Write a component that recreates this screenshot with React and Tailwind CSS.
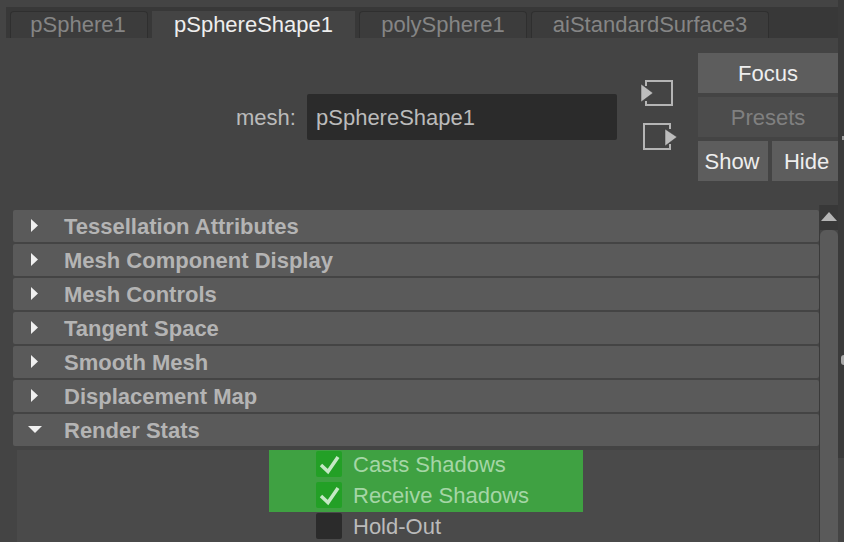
import React from 'react';

const tabs = [
  { label: 'pSphere1', width: 'w-[138px] pr-[2px]' },
  { label: 'pSphereShape1', width: 'w-[203px]', active: true },
  { label: 'polySphere1', width: 'w-[168px]' },
  { label: 'aiStandardSurface3', width: 'w-[238px]' },
];

const sections = [
  'Tessellation Attributes',
  'Mesh Component Display',
  'Mesh Controls',
  'Tangent Space',
  'Smooth Mesh',
  'Displacement Map',
];

const Tab = ({ label, width, active }) => (
  <div
    className={`${width} h-[27px] flex items-center justify-center text-[22px] leading-none ${
      active
        ? 'bg-[#444444] text-[#eeeeee]'
        : 'bg-[#3c3c3c] text-[#858585] border-x border-t border-[#2f2f2f] rounded-t-sm'
    }`}
  >
    {label}
  </div>
);

const PrevIcon = () => (
  <svg width="38" height="28" viewBox="0 0 38 28">
    <path d="M6 7V2H32V26H6V22" fill="none" stroke="#b5b5b5" strokeWidth="2" />
    <path d="M1 5L13 14L1 23Z" fill="#bdbdbd" stroke="#383838" strokeWidth="0.5" />
  </svg>
);

const NextIcon = () => (
  <svg width="38" height="29" viewBox="0 0 38 29">
    <path d="M30 7V2H4V27H30V22" fill="none" stroke="#b5b5b5" strokeWidth="2" />
    <path d="M25 7L37 15L25 24Z" fill="#bdbdbd" stroke="#383838" strokeWidth="0.5" />
  </svg>
);

const Caret = ({ open }) => (
  <svg width="14" height="16" viewBox="0 0 14 16" className="shrink-0 -mt-[1px]">
    {open ? <path d="M0 4H14L7 11Z" fill="#f0f0f0" /> : <path d="M3 1L10 7.5L3 14Z" fill="#f0f0f0" />}
  </svg>
);

const SectionRow = ({ label, open }) => (
  <div className="h-8 mb-0.5 pl-[15px] flex items-center gap-[22px] bg-[#5a5a5a] rounded-[2px]">
    <Caret open={open} />
    <span className="font-bold text-[22px] leading-none pt-[1px] text-[#b4b4b4]">{label}</span>
  </div>
);

const Check = ({ label, checked }) => (
  <div className={`h-[31px] w-[314px] pl-[47px] pt-[1px] flex items-start gap-[11px] ${checked ? 'bg-[#3fa142]' : ''}`}>
    <div className={`w-[26px] h-[26px] rounded-[2px] ${checked ? 'bg-[#23a026]' : 'bg-[#2b2b2b]'}`}>
      {checked && (
        <svg width="26" height="26" viewBox="0 0 26 26">
          <path d="M5 14L12 20.5L22 6" fill="none" stroke="#c5e8c5" strokeWidth="3.5" />
        </svg>
      )}
    </div>
    <span className={`text-[22px] leading-[28px] ${checked ? 'text-[#a5d6a6]' : 'text-[#bbbbbb]'}`}>{label}</span>
  </div>
);

export default function App() {
  return (
    <div className="w-[844px] h-[542px] flex overflow-hidden bg-[#444444] font-['Liberation_Sans',Arial,sans-serif]">
      <div className="w-[838px] shrink-0 flex flex-col">
        {/* tab strip */}
        <div className="mt-[7px] ml-[6px] h-[31px] pl-1 flex gap-1 items-end bg-[#383838]">
          {tabs.map((t) => (
            <Tab key={t.label} {...t} />
          ))}
        </div>

        {/* mesh field and buttons */}
        <div className="h-[167px] flex">
          <div className="ml-[236px] mt-14 h-[46px] flex items-center">
            <span className="w-[71px] pt-[2px] text-[22px] leading-none text-[#bbbbbb]">mesh:</span>
            <div className="w-[310px] h-[46px] pl-[9px] pt-[1px] flex items-center bg-[#2b2b2b] rounded-[2px] text-[22px] text-[#bbbbbb]">
              pSphereShape1
            </div>
          </div>
          <div className="ml-[23px] w-[38px] pt-[41px] flex flex-col gap-[15px]">
            <PrevIcon />
            <NextIcon />
          </div>
          <div className="ml-5 w-[140px] pt-[15px] flex flex-col gap-1">
            <div className="h-10 flex items-center justify-center bg-[#5d5d5d] text-[22px] text-[#eeeeee]">Focus</div>
            <div className="h-10 flex items-center justify-center bg-[#4c4c4c] text-[22px] text-[#808080]">Presets</div>
            <div className="flex gap-1">
              <div className="w-[70px] h-10 pr-[2px] flex items-center justify-center bg-[#5d5d5d] text-[22px] text-[#eeeeee]">Show</div>
              <div className="w-[66px] h-10 pl-[3px] flex items-center justify-center bg-[#5d5d5d] text-[22px] text-[#eeeeee]">Hide</div>
            </div>
          </div>
        </div>

        {/* attribute sections */}
        <div className="ml-[13px] flex flex-1 min-h-0">
          <div className="w-[806px] pt-[5px]">
            {sections.map((s) => (
              <SectionRow key={s} label={s} />
            ))}
            <SectionRow label="Render Stats" open />
            <div className="ml-1 mt-1 h-[94px] pl-[252px] bg-[#4a4a4a]">
              <Check label="Casts Shadows" checked />
              <Check label="Receive Shadows" checked />
              <Check label="Hold-Out" />
            </div>
          </div>
          <div className="w-[19px] border-l border-[#3a3a3a] flex flex-col">
            <div className="h-[25px] pt-[7px] bg-[#383838] flex justify-center">
              <svg width="16" height="9" viewBox="0 0 16 9"><path d="M8 0L16 9H0Z" fill="#b5b5b5" /></svg>
            </div>
            <div className="flex-1 bg-[#5a5a5a] rounded-t-md" />
          </div>
        </div>
      </div>

      {/* dark edge, with the clipped bits of the next panel */}
      <div className="flex-1 flex flex-col items-end h-[458px] bg-[#3a3a3a]">
        <div className="mt-[136px] w-[2px] h-1 bg-[#999999]" />
        <div className="mt-[215px] w-[3px] h-[10px] rounded-l-full bg-[#a8a8a8]" />
      </div>
    </div>
  );
}
